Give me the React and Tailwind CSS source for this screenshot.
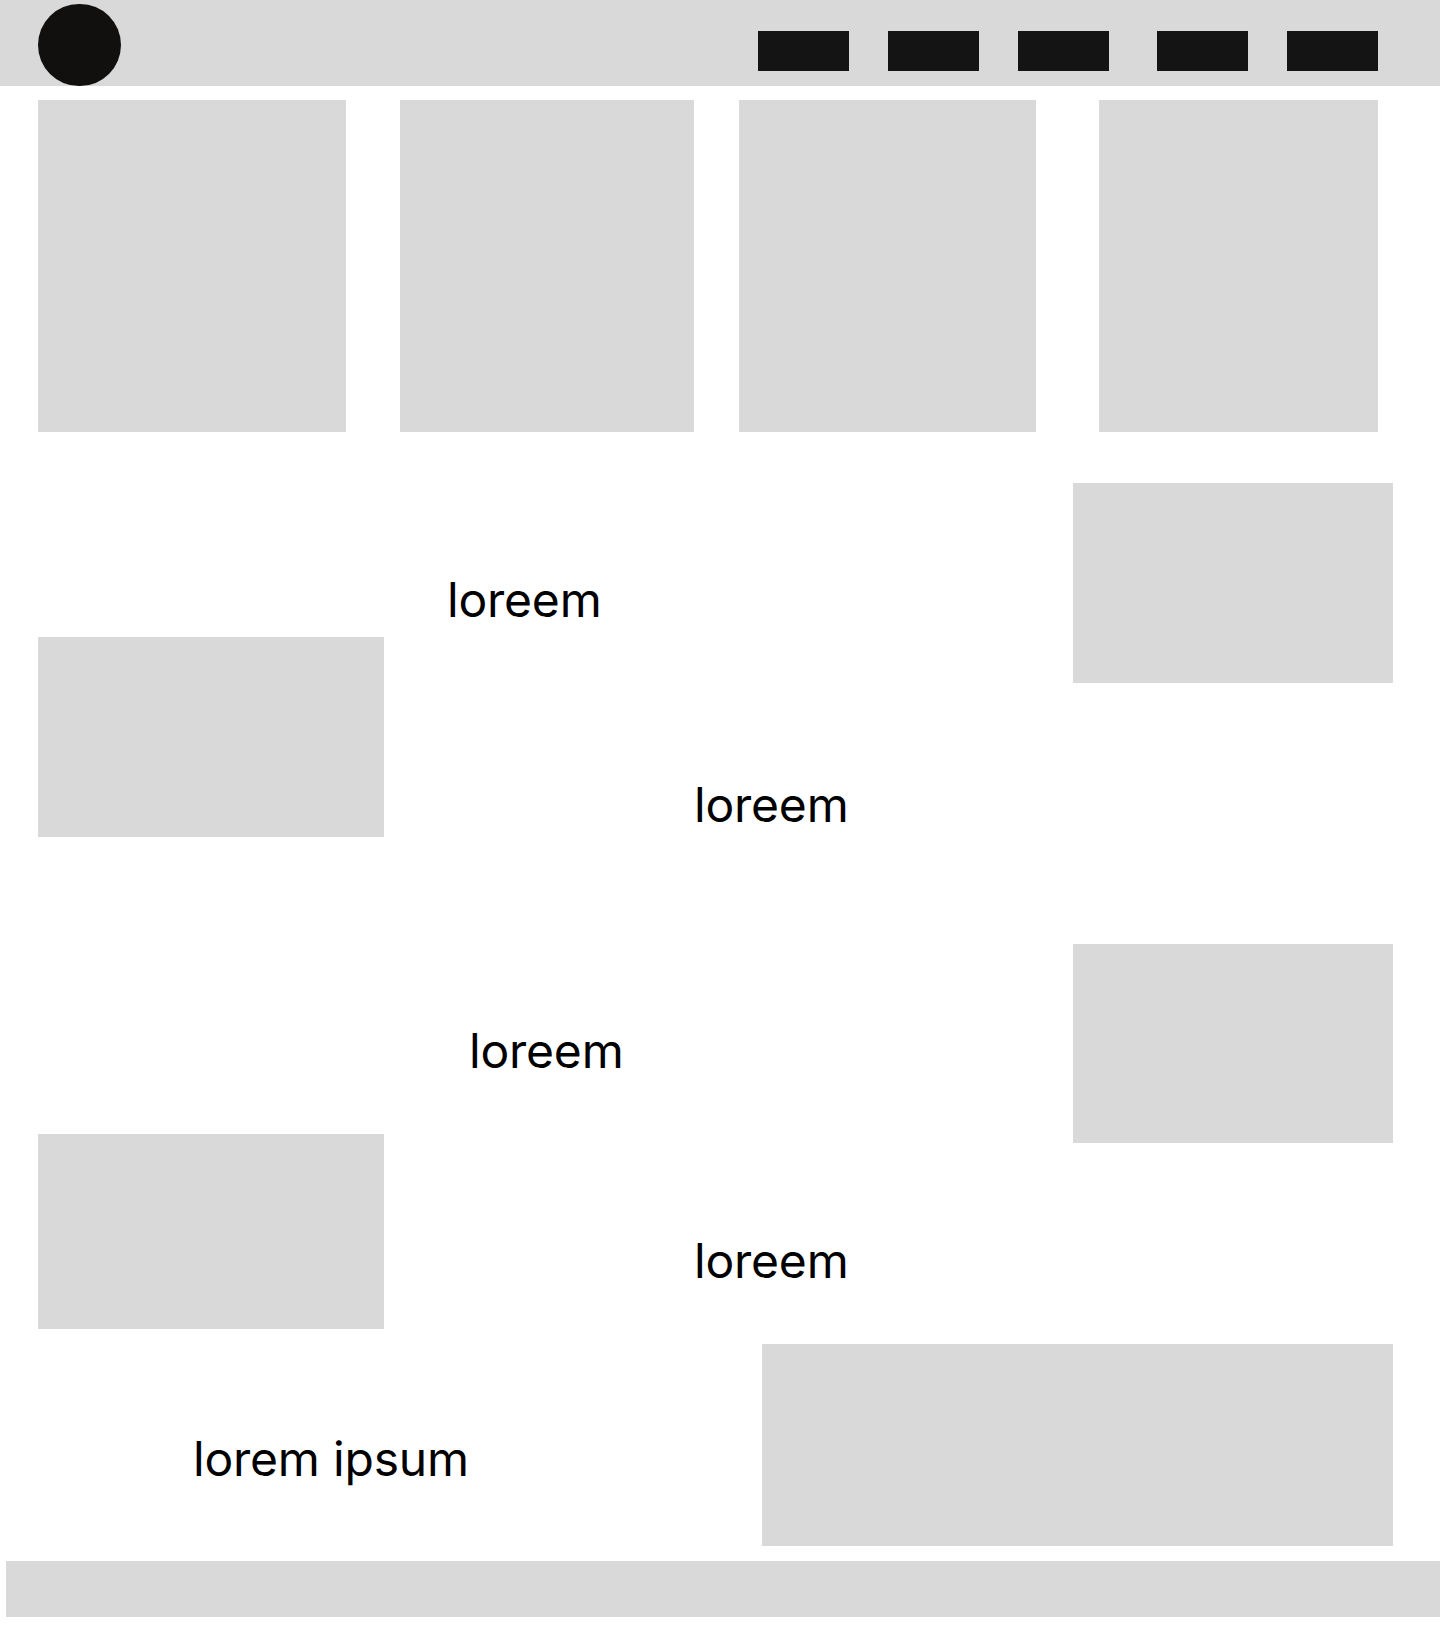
import React from 'react';

const navItems = ['first', 'second', 'third'];
const navItemsRight = ['fourth', 'fifth'];

const Loreem = ({ className, children }) => (
    <p className={`text-[48px] leading-[58px] tracking-[-0.2px] text-black font-normal ${className}`}>{children}</p>
);

const App = () => {
    return (
        <div className="min-h-[1630px] w-full bg-white font-['Inter',sans-serif] overflow-hidden">
            {/* top bar */}
            <header className="flex h-[86px] items-start bg-[#d9d9d9] pl-[38px] pr-[62px]">
                <div className="mt-[4px] h-[82px] w-[83px] rounded-full bg-[#11100e]"></div>
                <nav className="mt-[31px] ml-auto flex gap-[48px]">
                    <div className="flex gap-[39px]">
                        {navItems.map((item) => (
                            <div key={item} className="h-[40px] w-[91px] bg-[#141414]"></div>
                        ))}
                    </div>
                    <div className="flex gap-[39px]">
                        {navItemsRight.map((item) => (
                            <div key={item} className="h-[40px] w-[91px] bg-[#141414]"></div>
                        ))}
                    </div>
                </nav>
            </header>

            {/* four tall cards */}
            <section className="flex pt-[14px] pl-[38px]">
                <div className="h-[332px] w-[308px] bg-[#d9d9d9]"></div>
                <div className="ml-[54px] h-[332px] w-[294px] bg-[#d9d9d9]"></div>
                <div className="ml-[45px] h-[332px] w-[297px] bg-[#d9d9d9]"></div>
                <div className="ml-[63px] h-[332px] w-[279px] bg-[#d9d9d9]"></div>
            </section>

            {/* zig zag blocks */}
            <section className="flex pl-[38px]">
                <div className="w-[346px] shrink-0">
                    <div className="mt-[205px] h-[200px] bg-[#d9d9d9]"></div>
                    <div className="mt-[297px] h-[195px] bg-[#d9d9d9]"></div>
                </div>
                <div className="w-[689px] shrink-0">
                    <Loreem className="mt-[139px] ml-[63px]">loreem</Loreem>
                    <Loreem className="mt-[147px] ml-[310px]">loreem</Loreem>
                    <Loreem className="mt-[188px] ml-[85px]">loreem</Loreem>
                    <Loreem className="mt-[152px] ml-[310px]">loreem</Loreem>
                </div>
                <div className="w-[320px] shrink-0">
                    <div className="mt-[51px] h-[200px] bg-[#d9d9d9]"></div>
                    <div className="mt-[261px] h-[199px] bg-[#d9d9d9]"></div>
                </div>
            </section>

            {/* bottom row */}
            <section className="flex items-start">
                <Loreem className="mt-[101px] ml-[193px] w-[569px]">lorem ipsum</Loreem>
                <div className="mt-[15px] h-[202px] w-[631px] bg-[#d9d9d9]"></div>
            </section>

            <footer className="mt-[15px] ml-[6px] h-[56px] bg-[#d9d9d9]"></footer>
        </div>
    );
};

export default App;
